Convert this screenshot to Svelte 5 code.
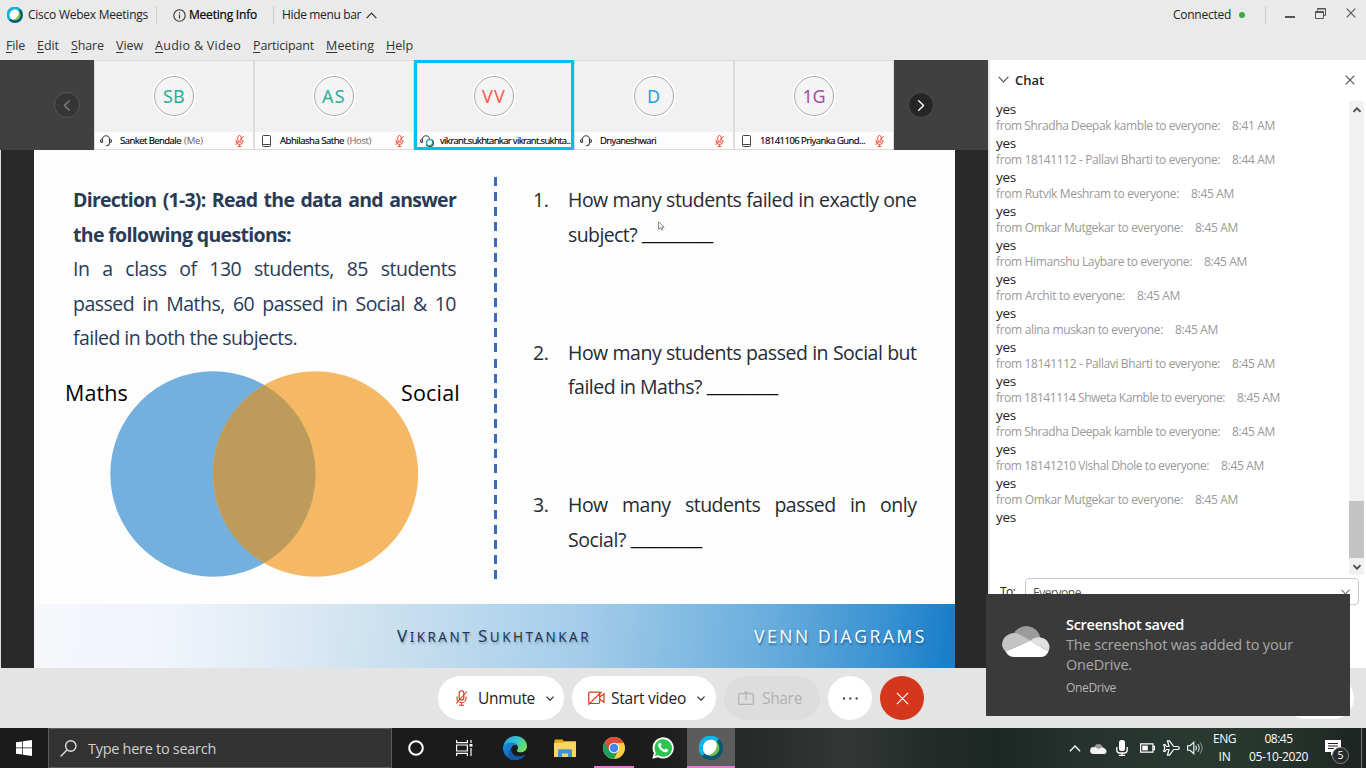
<script>
  // Spreads a label's letters so that it takes the given width.
  function fit(node, width) {
    const natural = node.getBoundingClientRect().width;
    const count = node.textContent.length;
    node.style.letterSpacing = `${(width - natural) / count}px`;
  }

  const menus = [
    ['File', 19], ['Edit', 22], ['Share', 33], ['View', 27], ['Audio & Video', 86],
    ['Participant', 61], ['Meeting', 48], ['Help', 27]
  ];

  const people = [
    { initials: 'SB', iw: 22, color: '#2fae94', name: 'Sanket Bendale', w: 61, role: '(Me)', rw: 19, device: 'headset', muted: true },
    { initials: 'AS', iw: 24, color: '#2fae94', name: 'Abhilasha Sathe', w: 64, role: '(Host)', rw: 24, device: 'phone', muted: true },
    { initials: 'VV', iw: 24, color: '#ff5c50', name: 'vikrant.sukhtankar vikrant.sukhta...', w: 132, device: 'webex', active: true },
    { initials: 'D', iw: 14, color: '#2a9fd8', name: 'Dnyaneshwari', w: 56, device: 'headset', muted: true },
    { initials: '1G', iw: 23, color: '#a24fa5', name: '18141106 Priyanka Gund...', w: 105, device: 'phone', muted: true }
  ];

  const messages = [
    ['Shradha Deepak kamble', 224, '8:41 AM'],
    ['18141112 - Pallavi Bharti', 224, '8:44 AM'],
    ['Rutvik Meshram', 183, '8:45 AM'],
    ['Omkar Mutgekar', 187, '8:45 AM'],
    ['Himanshu Laybare', 196, '8:45 AM'],
    ['Archit', 129, '8:45 AM'],
    ['alina muskan', 167, '8:45 AM'],
    ['18141112 - Pallavi Bharti', 224, '8:45 AM'],
    ['18141114 Shweta Kamble', 229, '8:45 AM'],
    ['Shradha Deepak kamble', 224, '8:45 AM'],
    ['18141210 Vishal Dhole', 213, '8:45 AM'],
    ['Omkar Mutgekar', 187, '8:45 AM']
  ];

  const questions = [
    ['1.', 'How many students failed in exactly one', 'subject?', 69],
    ['2.', 'How many students passed in Social but', 'failed in Maths?', 134],
    ['3.', 'How many students passed in only', 'Social?', 58]
  ];
</script>

{#snippet webex(size)}
  <svg width={size} height={size} viewBox="0 0 24 24">
    <circle cx="12" cy="12" r="12" fill="#0a5875" />
    <path d="M3 20A12 12 0 0 1 20 3L16 8 8 16Z" fill="#12b4e4" />
    <circle cx="12.2" cy="12" r="8.2" fill="#6fbf4b" />
    <path d="M4 13C3.5 7 8 3.8 12 3.8c4 0 6.200 2.700 5.700 6.500C17 15.500 12 19.500 8.500 19 6 18.300 4.200 16 4 13Z" fill="#fff" />
  </svg>
{/snippet}

{#snippet mic(w, h, color)}
  <svg width={w} height={h} viewBox="0 0 12 16" fill="none" stroke={color} stroke-width="1.100">
    <rect x="3.700" y=".7" width="4.600" height="9.300" rx="2.300" />
    <path d="M1.500 6.500v1.700a4.500 4.500 0 0 0 9 0V6.500M6 12.700v2.500M3.500 15.300h5M.6 13.500L11.500 1.500" />
  </svg>
{/snippet}

{#snippet chevron(w, h, color, up, sw = 1.300)}
  <svg width={w} height={h} viewBox="0 0 10 6" fill="none" stroke={color} stroke-width={sw}>
    {#if up}<path d="M.6 5.400L5 .8l4.400 4.600" />{:else}<path d="M.6 .6L5 5.200 9.400 .6" />{/if}
  </svg>
{/snippet}

{#snippet cross(size, color, sw)}
  <svg width={size} height={size} viewBox="0 0 10 10" stroke={color} stroke-width={sw}><path d="M.7 .7l8.600 8.600M9.300 .7L.7 9.300" /></svg>
{/snippet}

<div class="desktop">
  <header class="titlebar">
    {@render webex(16)}
    <span class="app" use:fit={120}>Cisco Webex Meetings</span>
    <i class="sep"></i>
    <svg class="info" width="13" height="13" viewBox="0 0 13 13" fill="none" stroke="#333" stroke-width="1.100"><circle cx="6.500" cy="6.500" r="5.700" /><path d="M6.500 5.500v4M6.500 3.200v1.300" /></svg>
    <span class="minfo" use:fit={68}>Meeting Info</span>
    <i class="sep second"></i>
    <span class="hide" use:fit={79}>Hide menu bar</span>
    {@render chevron(11, 7, '#333', true, 1.100)}
    <span class="grow"></span>
    <span use:fit={58}>Connected</span>
    <i class="online"></i>
    <i class="sep third"></i>
    <span class="winbtns">
      <svg width="10" height="12" viewBox="0 0 10 12"><path d="M0 9h10v2H0z" fill="#555" /></svg>
      <svg width="11" height="11" viewBox="0 0 11 11" fill="none" stroke="#555"><path d="M2.500 2.500V.5h8v7h-2M2.500 1h8M.5 3.500h8v7h-8zM.5 4.500h8" /></svg>
      {@render cross(10, '#555', 1.200)}
    </span>
  </header>
  <nav class="menubar">
    {#each menus as [label, w]}
      <span use:fit={w}><u>{label[0]}</u>{label.slice(1)}</span>
    {/each}
  </nav>

  <div class="main">
    <section class="meeting">
      <div class="strip">
        <div class="side prev"><span class="round">{@render chevron(12, 7, '#777', false, 1.300)}</span></div>
        {#each people as p}
          <div class="tile" class:active={p.active}>
            <div class="face"><span class="avatar" style:color={p.color}><span use:fit={p.iw}>{p.initials}</span></span></div>
            <div class="label">
              <span class="device">
                {#if p.device === 'phone'}
                  <svg width="9" height="12" viewBox="0 0 9 12" fill="none" stroke="#444"><rect x=".5" y=".5" width="8" height="11" rx="1" /><path d="M1 9.500h7" /></svg>
                {:else}
                  <svg width="12" height="12" viewBox="0 0 12 12" fill="none" stroke="#444" stroke-width="1.100"><path d="M2.500 7.500V4.500a3.500 3.800 0 0 1 7 0v3M2.500 4.200C.8 4.200.5 5 .5 5.800s.5 1.700 2 1.700M9.500 4.200c1.700 0 2 .8 2 1.600s-.5 1.700-2 1.700C9.500 9.800 8 10.800 6 10.800" /></svg>
                {/if}
                {#if p.device === 'webex'}<span class="mini">{@render webex(8)}</span>{/if}
              </span>
              <span class="name" use:fit={p.w}>{p.name}</span>
              {#if p.role}<span class="role" use:fit={p.rw}>{p.role}</span>{/if}
              {#if p.muted}<span class="muted">{@render mic(9, 12, '#f0372c')}</span>{/if}
            </div>
          </div>
        {/each}
        <div class="side next"><span class="round">{@render chevron(12, 7, '#fff', false, 1.200)}</span></div>
      </div>

      <div class="stage">
        <div class="slide">
          <div class="content">
            <div class="left">
              <div class="brief">
                <b class="just">Direction (1-3): Read the data and answer</b>
                <b><span use:fit={218}>the following questions:</span></b>
                <span class="just">In a class of 130 students, 85 students</span>
                <span class="just">passed in Maths, 60 passed in Social &amp; 10</span>
                <span><span use:fit={224}>failed in both the subjects.</span></span>
              </div>
              <div class="venn">
                <span class="set" use:fit={63}>Maths</span>
                <svg width="310" height="208" viewBox="0 0 310 208">
                  <circle cx="104" cy="104" r="102.700" fill="#73b0dd" />
                  <circle cx="206.500" cy="104" r="102.700" fill="#f5b966" />
                  <path d="M155.250 15.010A102.700 102.700 0 0 1 155.250 192.990A102.700 102.700 0 0 1 155.250 15.010Z" fill="#bd9c5b" />
                </svg>
                <span class="set social" use:fit={59}>Social</span>
              </div>
            </div>
            <div class="divider"></div>
            <ol class="questions">
              {#each questions as [n, first, second, w]}
                <li>
                  <span class="num">{n}</span>
                  <div class="q">
                    <span class="just">{first}</span>
                    <span class="answer"><span use:fit={w}>{second}</span><span class="blank">________</span></span>
                  </div>
                </li>
              {/each}
            </ol>
          </div>
          <footer class="ribbon">
            <span class="author" use:fit={194}><big>V</big>IKRANT <big>S</big>UKHTANKAR</span>
            <span class="topic" use:fit={173}>VENN DIAGRAMS</span>
          </footer>
          <svg class="cursor" width="7" height="10" viewBox="0 0 7 10"><path d="M.6 .8v7.500l2-1.700 1.200 2.500 1-.6-1-2.300h2.400z" fill="#fff" stroke="#555" stroke-width=".7" /></svg>
        </div>
      </div>
    </section>

    <aside class="chat">
      <div class="chathead">
        {@render chevron(11, 7, '#555', false, 1)}
        <b use:fit={29}>Chat</b>
        <span class="grow"></span>
        {@render cross(10, '#555', 1.200)}
      </div>
      <div class="chatbody">
        <div class="log">
          <div class="yes"><span use:fit={20}>yes</span></div>
          {#each messages as [who, w, time]}
            <div class="from"><span use:fit={w}>from {who} to everyone:</span><span use:fit={43}>{time}</span></div>
            <div class="yes"><span use:fit={20}>yes</span></div>
          {/each}
        </div>
        <div class="scroll">
          {@render chevron(8, 6, '#505050', true, 2.300)}
          <i class="thumb"></i>
          {@render chevron(8, 6, '#505050', false, 2.300)}
        </div>
      </div>
      <div class="to"><span use:fit={15}>To:</span><div class="select"><span use:fit={48}>Everyone</span>{@render chevron(9, 6, '#777', false)}</div></div>
    </aside>
  </div>

  <div class="controls">
    <button class="pill unmute">{@render mic(13, 16, '#d4371c')}<span use:fit={57}>Unmute</span>{@render chevron(8, 5, '#333', false, 1.500)}</button>
    <button class="pill video">
      <svg width="17" height="14" viewBox="0 0 17 14" fill="none" stroke="#d4371c" stroke-width="1.200"><rect x=".7" y="1.200" width="11" height="11.300" rx="1.200" /><path d="M12 5.800l4-3v8.400l-4-3M.3 13.700L13.600 .7" /></svg>
      <span use:fit={75}>Start video</span>{@render chevron(8, 5, '#333', false, 1.500)}
    </button>
    <button class="pill share">
      <svg width="16" height="14" viewBox="0 0 16 14" fill="none" stroke="#b2b2b2" stroke-width="1.200"><path d="M5.200 2.600H2A1.300 1.300 0 0 0 .7 3.900V12A1.300 1.300 0 0 0 2 13.300h12a1.300 1.300 0 0 0 1.300-1.300V3.900A1.300 1.300 0 0 0 14 2.600h-3.200M8 9.300V.9M5.300 3.300L8 .8l2.700 2.500" /></svg>
      <span use:fit={40}>Share</span>
    </button>
    <button class="disc"><svg width="15" height="3" viewBox="0 0 15 3" fill="#333"><path d="M0 .5h2v2H0zM6.300 .5h2v2h-2zM12.600 .5h2v2h-2z" /></svg></button>
    <button class="disc end">{@render cross(13, '#fff', 0.9)}</button>
    <span class="hiddenpill"></span>
  </div>

  <footer class="taskbar">
    <div class="start">
      <svg width="16" height="16" viewBox="0 0 16 16" fill="#fff"><path d="M0 2.300L6.300 1.400V7.600H0zM7 1.300L16 0V7.600H7zM0 8.300H6.300V14.600L0 13.700zM7 8.300H16V16L7 14.700z" /></svg>
    </div>
    <div class="search">
      <svg width="17" height="17" viewBox="0 0 17 17" fill="none" stroke="#ddd" stroke-width="1.400"><circle cx="10.800" cy="6" r="5.200" /><path d="M7 9.900L.6 16.400" /></svg>
      <span use:fit={128}>Type here to search</span>
    </div>
    <div class="apps">
      <span class="cortana"><svg width="16" height="16" viewBox="0 0 16 16"><circle cx="8" cy="8" r="6.800" fill="none" stroke="#fff" stroke-width="2" /></svg></span>
      <span><svg width="17" height="16" viewBox="0 0 17 16" fill="none" stroke="#fff" stroke-width="1.200"><path d="M.6 0v2.600h10.800V0M.6 16v-2.600h10.800V16M.6 5h10.800v6H.6zM15 0v3M15 8v8" /><path d="M13.500 4h3v2.600h-3z" fill="#fff" stroke="none" /></svg></span>
      <span class="edge"><svg width="24" height="24" viewBox="0 0 24 24">
        <defs>
          <linearGradient id="edgeTop" x1="0" y1="0" x2="1" y2=".6"><stop offset="0" stop-color="#2b9fe5" /><stop offset=".5" stop-color="#35c1d3" /><stop offset="1" stop-color="#6ee05a" /></linearGradient>
          <linearGradient id="edgeLow" x1="0" y1="0" x2="1" y2="1"><stop offset="0" stop-color="#1b8fe0" /><stop offset="1" stop-color="#0c4fa0" /></linearGradient>
        </defs>
        <path d="M.3 10.500C1.500 4 6.500 0 12.200 0 19 0 24 4.700 24 10c0 4-2.900 6.300-6.300 6.300-2.600 0-4.200-1-3.700-2 1.500-1.800 1.500-5-1.600-6.300C8 6.200 2.500 7 .3 10.500Z" fill="url(#edgeTop)" />
        <path d="M0 12C0 8.500 4 6.500 8 6.500c4.500 0 7.500 2.500 7.200 5.300-.2-1.500-1.500-2.800-3.200-2.800-3 0-4.300 3-3.800 5.800.6 3.500 4 6 8 5.700 2.600-.2 4.300-1 5.800-1.800C20 22 16.500 24 12 24 5.500 24 0 18.800 0 12Z" fill="url(#edgeLow)" />
        <path d="M8 24C4.500 20 5 13 9.500 10.200 7.800 12 7.700 14 8.200 15.500c1 3.300 4.300 5.200 8 5 2.600-.2 4.300-1 5.800-1.800C19 23.500 13 25 8 24Z" fill="#1258a5" />
      </svg></span>
      <span><svg width="22" height="18" viewBox="0 0 22 18"><path d="M.5 1.500A1 1 0 0 1 1.500 .5h7l1.500 2H22V18H.5z" fill="#e6a817" /><path d="M0 3.700h9l1.500-1.200H22V18H0z" fill="#fdd661" /><path d="M4 18v-6.500a1.300 1.300 0 0 1 1.300-1.300h11.400a1.300 1.300 0 0 1 1.300 1.300V18h-4v-3.600H8V18z" fill="#3f94d6" /></svg></span>
      <span class="running"><svg width="22" height="22" viewBox="0 0 22 22">
        <circle cx="11" cy="11" r="11" fill="#ffcd42" />
        <path d="M11 11L1.500 5.500A11 11 0 0 0 11 22L15.300 13.500Z" fill="#1e9e5a" />
        <path d="M1.500 5.500A11 11 0 0 1 20.500 5.500L20.500 6H11L6.700 13.500Z" fill="#df4b3c" />
        <circle cx="11" cy="11" r="5.300" fill="#f2f2f2" /><circle cx="11" cy="11" r="4.200" fill="#4285f0" />
      </svg></span>
      <span><svg width="22" height="22" viewBox="0 0 22 22"><path d="M.3 21.700l1.600-5.600A10.600 10.600 0 1 1 6 20.200z" fill="#fff" /><path d="M2.800 19.200l1-3.500A8.800 8.800 0 1 1 6.300 18.300z" fill="#2bc54f" /><path d="M7.500 5.700c-1.800 1-1.800 3-.3 5.300 1.900 2.900 4.700 4.700 7 4.200 1.500-.4 2.100-1.400 1.900-2.500l-2.500-1.300-1.300 1.400c-1.700-.7-3-2-3.700-3.500l1-1.300-1-2.300z" fill="#fff" /></svg></span>
      <span class="running current">{@render webex(24)}</span>
    </div>
    <span class="grow"></span>
    <div class="tray">
      <span class="t1">{@render chevron(12, 7, '#fff', true, 1.100)}</span>
      <svg class="t2" width="17" height="11" viewBox="0 0 17 11"><path d="M4.500 3.500A4.500 4.500 0 0 1 12.500 3.500L13 8H3z" fill="#999" /><path d="M3.500 11a3.500 3.500 0 0 1 .3-7c2 0 3.500 1 5 2.200 1.500-1.500 3.500-2 5-1.200 4 1.500 3.200 6 .2 6z" fill="#f2f2f2" /></svg>
      <svg class="t3" width="12" height="16" viewBox="0 0 12 16" fill="none" stroke="#fff" stroke-width="1.300"><rect x="3" y="0" width="6" height="11" rx="2.500" fill="#fff" stroke="none" /><path d="M.8 7v3q0 3 3 3h4.400q3 0 3-3V7M6 13v2.400M3 15.300h6" /></svg>
      <svg class="t4" width="15" height="10" viewBox="0 0 15 10" fill="none" stroke="#fff" stroke-width="1.200"><path d="M.6 .8h12.300v8.400H.6zM13 3.300h1.400v3.400H13" /><path d="M2.300 2.600h5.500v4.800H2.300z" fill="#fff" stroke="none" /></svg>
      <svg class="t5" width="17" height="16" viewBox="0 0 17 16" fill="none" stroke="#fff" stroke-width="1.200"><path d="M6 6.500L4.500 .8h2l4.200 5.700h4q1.600.2 1.600 1.500t-1.600 1.500h-4L6.500 15.200h-2L6 9.500H3.500L2 11.500H.8L1.700 8 .8 4.500H2l1.500 2z" /></svg>
      <svg class="t6" width="17" height="14" viewBox="0 0 17 14" fill="none" stroke="#fff" stroke-width="1.100"><path d="M.6 4.700h2.500L6.800 1.300v11.400L3.100 9.300H.6zM8.700 4.700q1.500 2.300 0 4.600" /><path d="M10.800 3.200q2.800 3.800 0 7.600" stroke="#ccc" /><path d="M13 1.500q4.300 5.500 0 11" stroke="#888" /></svg>
      <div class="two lang"><span use:fit={23}>ENG</span><span use:fit={12}>IN</span></div>
      <div class="two clock"><span use:fit={28}>08:45</span><span use:fit={59}>05-10-2020</span></div>
      <div class="notif">
        <svg width="17" height="17" viewBox="0 0 17 17"><path d="M0 0h16v12H9l-3 4v-4H0z" fill="#fff" /><path d="M3 3.500h10M3 6h10M3 8.500h6" stroke="#222" stroke-width="1.100" /></svg>
        <i class="badge">5</i>
      </div>
      <i class="peek"></i>
    </div>
  </footer>

  <div class="toast">
    <svg width="48" height="31" viewBox="0 0 48 31">
      <path d="M11.500 7.800A14.500 14.500 0 0 1 38.500 11.500L30 17 15 12z" fill="#9b9b9b" />
      <path d="M3.500 25.500A12.300 12.300 0 0 1 0 19.500A12 12 0 0 1 18.500 9L29 14.800Z" fill="#c4c4c4" />
      <path d="M28.500 14.800Q33 10.500 38.500 11.500A9.800 9.800 0 0 1 46.500 25.500z" fill="#e0e0e0" />
      <path d="M3.500 25.500L28.500 14.800 46.500 25.500Q44 31 38.500 31H12.500Q6.500 31 3.500 25.500Z" fill="#fff" />
    </svg>
    <div class="msg">
      <b><span use:fit={118}>Screenshot saved</span></b>
      <span><span use:fit={227}>The screenshot was added to your</span></span>
      <span><span use:fit={66}>OneDrive.</span></span>
      <small><span use:fit={50}>OneDrive</span></small>
    </div>
  </div>
</div>

<style>
  :global(body) { margin: 0; overflow: hidden; }
  * { box-sizing: border-box; }
  svg { display: block; flex: none; }
  span, b { white-space: pre; flex: none; }
  i { flex: none; font-style: normal; }
  .desktop { width: 1366px; height: 768px; position: relative; display: flex; flex-direction: column; overflow: hidden; background: #eaeaea; font: 12px/16px "Open Sans", "Noto Sans", sans-serif; color: #222; }
  .grow { flex: 1 1 0; }

  .titlebar { height: 30px; flex: none; display: flex; align-items: center; padding: 0 11px 0 7px; }
  .app { margin-left: 5px; }
  .sep { width: 1px; height: 18px; background: #ccc; margin-left: 8px; }
  .info { margin-left: 16px; }
  .minfo { margin-left: 3px; color: #000; -webkit-text-stroke: .2px #000; }
  .second { margin-left: 16px; }
  .hide { margin: 0 5px 0 8px; }
  .online { width: 6px; height: 6px; border-radius: 50%; background: #3fa83f; margin-left: 8px; }
  .third { margin-left: 20px; }
  .winbtns { display: flex; align-items: center; gap: 20px; margin-left: 19px; margin-top: -4px; margin-right: -1px; }
  .menubar { height: 30px; flex: none; display: flex; align-items: center; gap: 12px; padding: 1px 0 0 6px; color: #333; font-size: 12.500px; }
  u { text-underline-offset: 2px; }

  .main { height: 608px; flex: none; display: flex; }
  .meeting { width: 990px; flex: none; border-right: 2px solid #e8e8e8; }
  .strip { height: 90px; display: flex; background: #404040; }
  .side { width: 94px; display: flex; align-items: center; }
  .prev { padding-left: 54px; }
  .next { padding-left: 14px; }
  .round { width: 26px; height: 26px; border-radius: 50%; border: 1px solid #555; background: #353535; display: flex; align-items: center; justify-content: center; }
  .next .round { background: #262626; border-color: #4d4d4d; }
  .prev .round :global(svg) { transform: rotate(90deg); }
  .next .round :global(svg) { transform: rotate(-90deg); }
  .tile { width: 160px; height: 90px; flex: none; background: #fdfdfd; border: 1px solid #dcdcdc; position: relative; }
  .tile.active::after { content: ""; position: absolute; inset: -1px; border: 3px solid #06bdf6; }
  .face { height: 71px; background: #f1f1f1; display: flex; justify-content: center; align-items: center; padding-bottom: 2px; }
  .avatar { width: 40px; height: 40px; border-radius: 50%; border: 1px solid #aaa; background: #f4f4f4; box-shadow: 0 0 0 1.500px #fff; display: flex; align-items: center; justify-content: center; font-size: 18px; line-height: 24px; font-family: "Noto Sans", "Open Sans", sans-serif; }
  .label { height: 17px; display: flex; align-items: center; padding: 1px 9px 0 4px; font-size: 9.500px; line-height: 14px; color: #000; }
  .device { width: 14px; display: flex; justify-content: center; position: relative; margin-right: 7px; }
  .mini { position: absolute; left: 7px; top: 4px; }
  .name { -webkit-text-stroke: .15px #000; }
  .role { color: #666; margin-left: 3px; }
  .muted { margin-left: auto; }

  .stage { height: 518px; background: #292929; padding-left: 33px; border-left: 1px solid #e0e0e0; }
  .slide { width: 921px; height: 518px; background: #fdfdfd; position: relative; display: flex; flex-direction: column; }
  .content { height: 454px; display: flex; padding-top: 27px; }
  .left { width: 459px; padding: 6px 0 0 31px; flex: none; }
  .brief { display: flex; flex-direction: column; width: 391px; padding-left: 8px; font-size: 19.500px; line-height: 34.500px; color: #293b57; }
  .brief > *, .q > * { display: block; }
  .just { text-align: justify; text-align-last: justify; white-space: nowrap; letter-spacing: -.5px; }
  b.just { letter-spacing: -.75px; }
  .just { white-space: normal; }
  .venn { display: flex; margin-top: 14px; }
  .set { font-size: 21.500px; line-height: 28px; color: #000; margin-top: 9px; margin-right: -19px; }
  .social { margin: 9px 0 0 -18px; }
  .divider { width: 3px; height: 409px; flex: none; margin-left: .5px; margin-right: -.5px; background: repeating-linear-gradient(#3c69c0 0 9px, transparent 9px 15.130px); }
  .questions { list-style: none; margin: 6px 0 0; padding: 0 0 0 37px; display: flex; flex-direction: column; gap: 83.500px; font-size: 19.500px; line-height: 34.500px; color: #262b33; }
  .questions li { display: flex; }
  .num { width: 35px; letter-spacing: -.5px; }
  .q { width: 348.500px; }
  .q .answer { display: flex; gap: 5px; }
  .blank { color: #111; font-family: "Liberation Sans", sans-serif; font-size: 16px; }
  .ribbon { height: 64px; display: flex; align-items: center; padding-left: 363px; background: linear-gradient(95deg, #f6f7fb 0%, #f1f4fb 14%, #e3edf6 24%, #c8dfef 40%, #a5cdea 59%, #6aaedd 79%, #3a92d2 92%, #1a7fc9 99%); }
  .author { font-family: "Noto Sans", sans-serif; font-size: 13.500px; line-height: 24px; color: #23364f; text-shadow: 1px 2px 2px #5f7f9d88; }
  big { font-size: 17px; }
  .topic { margin-left: 163px; font-size: 17.500px; line-height: 24px; color: #fff; text-shadow: 1px 2px 2px #134e80aa; }
  .cursor { position: absolute; left: 624px; top: 71px; }

  .chat { width: 376px; background: #fff; display: flex; flex-direction: column; }
  .chathead { height: 41px; display: flex; align-items: center; padding: 0 11px 2px 8px; }
  .chathead b { margin-left: 6px; font-size: 13px; font-weight: 600; }
  .chatbody { height: 474px; flex: none; display: flex; }
  .log { flex: 1; padding-left: 6px; }
  .yes { height: 18px; font-size: 13.500px; line-height: 17px; }
  .from { height: 16px; display: flex; gap: 12px; line-height: 14px; color: #999; font-size: 12px; }
  .scroll { width: 15px; margin-right: 2px; background: #f1f1f1; display: flex; flex-direction: column; align-items: center; padding: 6px 0 5px; }
  .thumb { width: 15px; height: 57px; background: #c3c3c3; margin: 388px 0 6px; }
  .to { display: flex; margin-top: 3px; padding-left: 10px; line-height: 27px; }
  .select { width: 334px; height: 27px; border: 1px solid #c9c9c9; border-radius: 4px; margin-left: 10px; padding: 1px 8px 0 7px; display: flex; align-items: center; justify-content: space-between; color: #555; }

  .controls { height: 60px; flex: none; background: #e4e4e4; display: flex; align-items: center; gap: 8px; padding-left: 438px; }
  button { border: 0; margin: 0; padding: 0; font: 15.500px/22px "Open Sans", "Noto Sans", sans-serif; color: #222; background: #fff; height: 44px; border-radius: 22px; display: flex; align-items: center; flex: none; }
  .unmute { width: 126px; padding-left: 17px; }
  .unmute span { margin: 0 11px 0 10px; }
  .video { width: 144px; padding-left: 16px; }
  .video span { margin: 0 11px 0 6px; }
  .share { width: 96px; padding-left: 14px; background: #ddd; color: #b2b2b2; }
  .share span { margin-left: 8px; }
  .disc { width: 44px; justify-content: center; }
  .end { background: #d4371c; }
  .hiddenpill { width: 70px; height: 42px; border-radius: 21px; background: #fff; margin-left: 352px; }

  .taskbar { height: 40px; flex: none; display: flex; color: #fff; background: linear-gradient(90deg, #1b1b1b 0 640px, #272828 735px, #333735 850px, #222b28 930px, #1d2723 1000px, #27312d 1080px, #293a32 1200px, #25332c 1290px, #1e2320 1366px); }
  .start { width: 48px; display: flex; align-items: center; justify-content: center; }
  .search { width: 344px; background: #333; border: 1px solid #5c5c5c; display: flex; align-items: center; gap: 11px; padding-left: 11px; font-size: 14.500px; color: #d0d0d0; }
  .search span { margin-top: 1px; }
  .apps { display: flex; }
  .apps > span { width: 49px; display: flex; align-items: center; justify-content: center; position: relative; }
  .apps > .cortana { width: 48px; }
  .apps > .edge { width: 51px; }
  .apps > .running::after { content: ""; position: absolute; bottom: 0; width: 40px; height: 2px; background: #f070dd; }
  .apps > .current { width: 48px; background: #5c5c5c; }
  .apps > .current::after { width: 48px; }
  .tray { display: flex; align-items: center; }
  .t2 { margin-left: 9px; }
  .t3 { margin-left: 9px; }
  .t4 { margin-left: 12px; }
  .t5 { margin-left: 8px; }
  .t6 { margin-left: 7px; }
  .two { display: flex; flex-direction: column; align-items: center; gap: 2px; font-size: 12px; line-height: 16px; margin-top: -1px; }
  .lang { margin-left: 9px; }
  .clock { margin-left: 13px; }
  .notif { position: relative; margin-left: 17px; }
  .badge { position: absolute; left: 7px; top: 7px; width: 17px; height: 17px; border-radius: 50%; background: #272b29; border: 1px solid #888; font-size: 10.500px; line-height: 15px; text-align: center; }
  .peek { width: 1px; height: 40px; background: #777; margin: 0 4px 0 19px; }

  .toast { position: absolute; left: 986px; top: 594px; width: 364px; height: 122px; background: #3a3a3a; display: flex; padding: 21px 0 0 16px; }
  .toast > svg { margin-top: 11px; }
  .msg { display: flex; flex-direction: column; margin-left: 16px; font-size: 14.500px; line-height: 20px; color: #a9a9a9; }
  .msg b { color: #fff; font-weight: 600; }
  .msg small { font-size: 12px; line-height: 16px; margin-top: 5px; color: #b5b5b5; }
</style>
